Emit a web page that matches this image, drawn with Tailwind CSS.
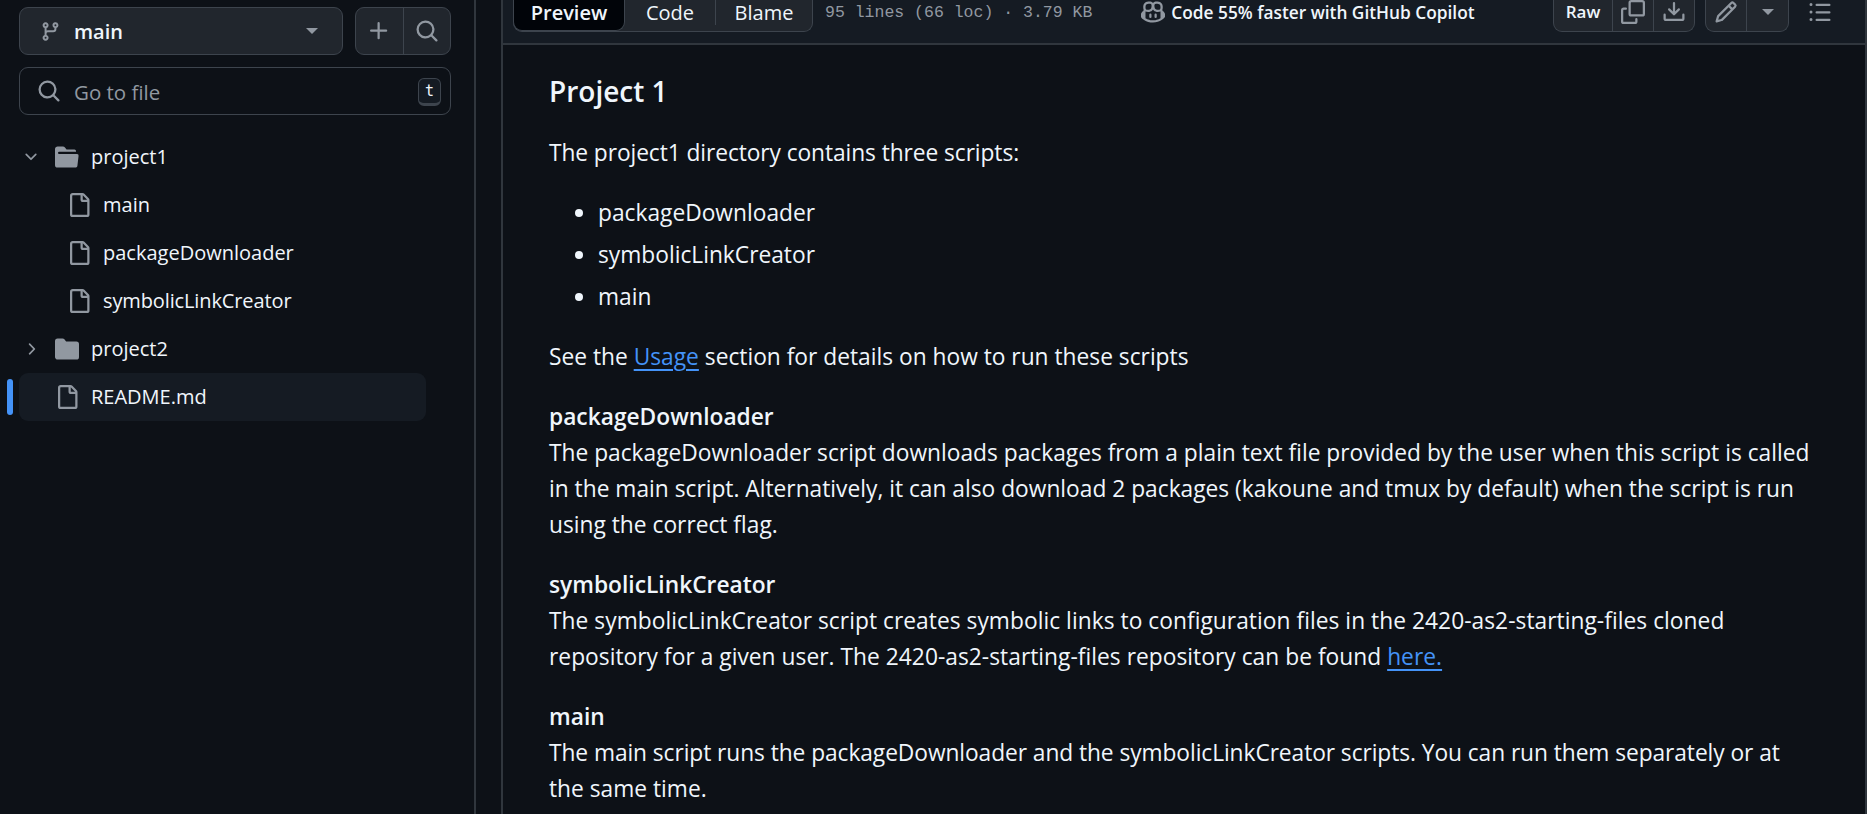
<!DOCTYPE html>
<html lang="en">
<head>
<meta charset="UTF-8">
<title>README.md</title>
<script src="https://cdn.jsdelivr.net/npm/@tailwindcss/browser@4"></script>
</head>
<body class="bg-[#0d1117] text-[#f0f6fc] font-['Open_Sans',sans-serif] overflow-hidden">
<div class="flex h-[814px] w-[1867px] overflow-hidden">

  <!-- file tree -->
  <aside class="w-[476px] shrink-0 border-r-2 border-[#30363d] pl-[19px] pr-[23px] pt-[7px]">
    <div class="flex gap-3 h-12">
      <div class="w-[324px] flex items-center bg-[#21262d] border border-[#3d444d] rounded-[9px] px-5">
        <svg class="w-[21px] h-[21px] text-[#9198a1]" viewBox="0 0 16 16" fill="currentColor"><path d="M9.5 3.25a2.25 2.25 0 1 1 3 2.122V6A2.5 2.5 0 0 1 10 8.5H6a1 1 0 0 0-1 1v1.128a2.251 2.251 0 1 1-1.5 0V5.372a2.25 2.25 0 1 1 1.5 0v1.836A2.493 2.493 0 0 1 6 7h4a1 1 0 0 0 1-1v-.628A2.25 2.25 0 0 1 9.5 3.25Zm-6 0a.75.75 0 1 0 1.5 0 .75.75 0 0 0-1.5 0Zm8.25-.75a.75.75 0 1 0 0 1.5.75.75 0 0 0 0-1.5ZM4.25 12a.75.75 0 1 0 0 1.5.75.75 0 0 0 0-1.5Z"/></svg>
        <span class="ml-[13px] pt-[2px] text-[20px] font-semibold">main</span>
        <span class="ml-auto mr-[4px] w-0 h-0 border-x-[6px] border-x-transparent border-t-[6px] border-t-[#9198a1]"></span>
      </div>
      <div class="flex-1 flex bg-[#21262d] border border-[#3d444d] rounded-[9px] text-[#9198a1]">
        <div class="flex-1 flex items-center justify-center border-r border-[#3d444d]">
          <svg class="w-6 h-6" viewBox="0 0 16 16" fill="currentColor"><path d="M7.75 2a.75.75 0 0 1 .75.75V7h4.25a.75.75 0 0 1 0 1.5H8.5v4.25a.75.75 0 0 1-1.5 0V8.5H2.75a.75.75 0 0 1 0-1.5H7V2.75A.75.75 0 0 1 7.75 2Z"/></svg>
        </div>
        <div class="flex-1 flex items-center justify-center">
          <svg class="w-6 h-6" viewBox="0 0 16 16" fill="currentColor"><path d="M10.68 11.74a6 6 0 0 1-7.922-8.982 6 6 0 0 1 8.982 7.922l3.04 3.04a.749.749 0 1 1-1.06 1.06ZM11.5 7a4.499 4.499 0 1 0-8.997 0A4.499 4.499 0 0 0 11.5 7Z"/></svg>
        </div>
      </div>
    </div>

    <div class="mt-3 h-12 flex items-center border border-[#3d444d] rounded-[9px] pl-[17px] pr-[9px]">
      <svg class="w-6 h-6 text-[#9198a1]" viewBox="0 0 16 16" fill="currentColor"><path d="M10.68 11.74a6 6 0 0 1-7.922-8.982 6 6 0 0 1 8.982 7.922l3.04 3.04a.749.749 0 1 1-1.06 1.06ZM11.5 7a4.499 4.499 0 1 0-8.997 0A4.499 4.499 0 0 0 11.5 7Z"/></svg>
      <span class="ml-[13px] pt-[2px] text-[20.5px] text-[#9198a1]">Go to file</span>
      <span class="ml-auto mt-[2px] w-[23px] h-[28px] flex items-center justify-center rounded-[6px] border border-[#3d444d] border-b-[3px] bg-[#151b23] font-['DejaVu_Sans_Mono',monospace] text-[15px]">t</span>
    </div>

    <ul class="mt-[18px] text-[20px] leading-[48px] w-[407px]">
      <li class="h-12 flex items-center">
        <svg class="ml-[3px] w-[18px] h-[18px] text-[#9198a1]" viewBox="0 0 16 16" fill="currentColor"><path d="M12.78 5.22a.749.749 0 0 1 0 1.06l-4.25 4.25a.749.749 0 0 1-1.06 0L3.22 6.28a.749.749 0 1 1 1.06-1.06L8 8.939l3.72-3.719a.749.749 0 0 1 1.06 0Z"/></svg>
        <svg class="ml-[15px] w-6 h-6 text-[#9198a1]" viewBox="0 0 16 16" fill="currentColor"><path d="M.513 1.513A1.75 1.75 0 0 1 1.75 1h3.5c.55 0 1.07.26 1.4.7l.9 1.2a.25.25 0 0 0 .2.1H13a1 1 0 0 1 1 1v.5H2.75a.75.75 0 0 0 0 1.5h11.978a1 1 0 0 1 .994 1.117L15 13.25A1.75 1.75 0 0 1 13.25 15H1.75A1.75 1.75 0 0 1 0 13.25V2.75c0-.464.184-.91.513-1.237Z"/></svg>
        <span class="ml-[12px]">project1</span>
      </li>
      <li class="h-12 flex items-center pl-[48px]">
        <svg class="w-6 h-6 text-[#9198a1]" viewBox="0 0 16 16" fill="currentColor"><path d="M2 1.75C2 .784 2.784 0 3.75 0h6.586c.464 0 .909.184 1.237.513l2.914 2.914c.329.328.513.773.513 1.237v9.586A1.75 1.75 0 0 1 13.25 16h-9.5A1.75 1.75 0 0 1 2 14.25Zm1.75-.25a.25.25 0 0 0-.25.25v12.5c0 .138.112.25.25.25h9.5a.25.25 0 0 0 .25-.25V6h-2.75A1.75 1.75 0 0 1 9 4.25V1.5Zm6.75.062V4.25c0 .138.112.25.25.25h2.688l-.011-.013-2.914-2.914-.013-.011Z"/></svg>
        <span class="ml-[12px]">main</span>
      </li>
      <li class="h-12 flex items-center pl-[48px]">
        <svg class="w-6 h-6 text-[#9198a1]" viewBox="0 0 16 16" fill="currentColor"><path d="M2 1.75C2 .784 2.784 0 3.75 0h6.586c.464 0 .909.184 1.237.513l2.914 2.914c.329.328.513.773.513 1.237v9.586A1.75 1.75 0 0 1 13.25 16h-9.5A1.75 1.75 0 0 1 2 14.25Zm1.75-.25a.25.25 0 0 0-.25.25v12.5c0 .138.112.25.25.25h9.5a.25.25 0 0 0 .25-.25V6h-2.75A1.75 1.75 0 0 1 9 4.25V1.5Zm6.75.062V4.25c0 .138.112.25.25.25h2.688l-.011-.013-2.914-2.914-.013-.011Z"/></svg>
        <span class="ml-[12px]">packageDownloader</span>
      </li>
      <li class="h-12 flex items-center pl-[48px]">
        <svg class="w-6 h-6 text-[#9198a1]" viewBox="0 0 16 16" fill="currentColor"><path d="M2 1.75C2 .784 2.784 0 3.75 0h6.586c.464 0 .909.184 1.237.513l2.914 2.914c.329.328.513.773.513 1.237v9.586A1.75 1.75 0 0 1 13.25 16h-9.5A1.75 1.75 0 0 1 2 14.25Zm1.75-.25a.25.25 0 0 0-.25.25v12.5c0 .138.112.25.25.25h9.5a.25.25 0 0 0 .25-.25V6h-2.75A1.75 1.75 0 0 1 9 4.25V1.5Zm6.75.062V4.25c0 .138.112.25.25.25h2.688l-.011-.013-2.914-2.914-.013-.011Z"/></svg>
        <span class="ml-[12px] tracking-[-0.12px]">symbolicLinkCreator</span>
      </li>
      <li class="h-12 flex items-center">
        <svg class="ml-[3px] w-[18px] h-[18px] text-[#9198a1]" viewBox="0 0 16 16" fill="currentColor"><path d="M6.22 3.22a.75.75 0 0 1 1.06 0l4.25 4.25a.75.75 0 0 1 0 1.06l-4.25 4.25a.751.751 0 0 1-1.042-.018.751.751 0 0 1-.018-1.042L9.94 8 6.22 4.28a.75.75 0 0 1 0-1.06Z"/></svg>
        <svg class="ml-[15px] w-6 h-6 text-[#9198a1]" viewBox="0 0 16 16" fill="currentColor"><path d="M1.75 1A1.75 1.75 0 0 0 0 2.75v10.5C0 14.216.784 15 1.75 15h12.5A1.75 1.75 0 0 0 16 13.25v-8.5A1.75 1.75 0 0 0 14.25 3H7.5a.25.25 0 0 1-.2-.1l-.9-1.2C6.07 1.26 5.55 1 5 1H1.75Z"/></svg>
        <span class="ml-[12px]">project2</span>
      </li>
      <li class="relative h-12 flex items-center pl-[36px] bg-[#151b23] rounded-[9px]">
        <span class="absolute left-[-12px] top-[6px] w-[6px] h-9 rounded-[3px] bg-[#4493f8]"></span>
        <svg class="w-6 h-6 text-[#9198a1]" viewBox="0 0 16 16" fill="currentColor"><path d="M2 1.75C2 .784 2.784 0 3.75 0h6.586c.464 0 .909.184 1.237.513l2.914 2.914c.329.328.513.773.513 1.237v9.586A1.75 1.75 0 0 1 13.25 16h-9.5A1.75 1.75 0 0 1 2 14.25Zm1.75-.25a.25.25 0 0 0-.25.25v12.5c0 .138.112.25.25.25h9.5a.25.25 0 0 0 .25-.25V6h-2.75A1.75 1.75 0 0 1 9 4.25V1.5Zm6.75.062V4.25c0 .138.112.25.25.25h2.688l-.011-.013-2.914-2.914-.013-.011Z"/></svg>
        <span class="ml-[12px]">README.md</span>
      </li>
    </ul>
  </aside>

  <div class="w-[25px] shrink-0"></div>

  <!-- file view -->
  <main class="flex-1 min-w-0 border-l-2 border-r-2 border-[#30363d]">
    <header class="h-[45px] bg-[#151b23] border-b-2 border-[#30363d] flex items-start pl-[10px] pr-[33px]">
      <div class="flex h-[32px] text-[20px] bg-[#21262d] border border-t-0 border-[#3d444d] rounded-b-[9px]">
        <span class="w-[112px] -ml-px bg-[#010409] border border-t-0 border-[#3d444d] rounded-b-[9px] flex items-center justify-center pb-[4px] font-semibold">Preview</span>
        <span class="w-[91px] flex items-center justify-center mb-[6px] border-r border-[#3d444d]">Code</span>
        <span class="w-[96px] flex items-center justify-center pb-[6px]">Blame</span>
      </div>
      <span class="ml-[12px] mt-[1px] text-[#9198a1] text-[16.5px] font-['Liberation_Mono',monospace]">95 lines (66 loc) · 3.79 KB</span>
      <svg class="ml-[49px] w-6 h-6 text-[#9198a1]" viewBox="0 0 16 16" fill="currentColor"><path d="M7.998 15.035c-4.562 0-7.873-2.914-7.998-3.749V9.338c.085-.628.677-1.686 1.588-2.065.013-.07.024-.143.036-.218.029-.183.06-.384.126-.612-.201-.508-.254-1.084-.254-1.656 0-.87.128-1.769.693-2.484.579-.733 1.494-1.124 2.724-1.261 1.206-.134 2.262.034 2.944.765.05.053.096.108.139.165.044-.057.094-.112.143-.165.682-.731 1.738-.899 2.944-.765 1.23.137 2.145.528 2.724 1.261.566.715.693 1.614.693 2.484 0 .572-.053 1.148-.254 1.656.066.228.098.429.126.612.012.076.024.148.037.218.924.385 1.522 1.471 1.591 2.095v1.872c0 .766-3.351 3.795-8.002 3.795Zm0-1.485c2.28 0 4.584-1.11 5.002-1.433V7.862l-.023-.116c-.49.21-1.075.291-1.727.291-1.146 0-2.059-.327-2.71-.991A3.222 3.222 0 0 1 8 6.303a3.24 3.24 0 0 1-.544.743c-.65.664-1.563.991-2.71.991-.652 0-1.236-.081-1.727-.291l-.023.116v4.255c.419.323 2.722 1.433 5.002 1.433ZM6.762 2.83c-.193-.206-.637-.413-1.682-.297-1.019.113-1.479.404-1.713.7-.247.312-.369.789-.369 1.554 0 .793.129 1.171.308 1.371.162.181.519.379 1.442.379.853 0 1.339-.235 1.638-.54.315-.322.527-.827.617-1.553.117-.935-.037-1.395-.241-1.614Zm4.155-.297c-1.044-.116-1.488.091-1.681.297-.204.219-.359.679-.242 1.614.091.726.303 1.231.618 1.553.299.305.784.54 1.638.54.922 0 1.28-.198 1.442-.379.179-.2.308-.578.308-1.371 0-.765-.123-1.242-.37-1.554-.233-.296-.693-.587-1.713-.7Z"/><path d="M6.25 9.037a.75.75 0 0 1 .75.75v1.501a.75.75 0 0 1-1.5 0V9.787a.75.75 0 0 1 .75-.75Zm4.25.75v1.501a.75.75 0 0 1-1.5 0V9.787a.75.75 0 0 1 1.5 0Z"/></svg>
      <span class="ml-[6px] text-[17.3px] font-semibold">Code 55% faster with GitHub Copilot</span>
      <div class="ml-auto flex items-start text-[#9198a1]">
        <div class="flex h-[32px] bg-[#21262d] border border-t-0 border-[#3d444d] rounded-b-[9px]">
          <span class="w-[59px] flex items-center justify-center pb-[8px] text-[17px] font-semibold text-[#f0f6fc] border-r border-[#3d444d]">Raw</span>
          <span class="w-[41px] flex items-center justify-center pb-[8px] border-r border-[#3d444d]">
            <svg class="w-6 h-6" viewBox="0 0 16 16" fill="currentColor"><path d="M0 6.75C0 5.784.784 5 1.75 5h1.5a.75.75 0 0 1 0 1.5h-1.5a.25.25 0 0 0-.25.25v7.5c0 .138.112.25.25.25h7.5a.25.25 0 0 0 .25-.25v-1.5a.75.75 0 0 1 1.5 0v1.5A1.75 1.75 0 0 1 9.25 16h-7.5A1.75 1.75 0 0 1 0 14.25Z"/><path d="M5 1.75C5 .784 5.784 0 6.75 0h7.5C15.216 0 16 .784 16 1.75v7.5A1.75 1.75 0 0 1 14.25 11h-7.5A1.75 1.75 0 0 1 5 9.25Zm1.75-.25a.25.25 0 0 0-.25.25v7.5c0 .138.112.25.25.25h7.5a.25.25 0 0 0 .25-.25v-7.5a.25.25 0 0 0-.25-.25Z"/></svg>
          </span>
          <span class="w-[40px] flex items-center justify-center pb-[8px]">
            <svg class="w-6 h-6" viewBox="0 0 16 16" fill="currentColor"><path d="M2.75 14A1.75 1.75 0 0 1 1 12.25v-2.5a.75.75 0 0 1 1.5 0v2.5c0 .138.112.25.25.25h10.5a.25.25 0 0 0 .25-.25v-2.5a.75.75 0 0 1 1.5 0v2.5A1.75 1.75 0 0 1 13.25 14Z"/><path d="M7.25 7.689V2a.75.75 0 0 1 1.5 0v5.689l1.97-1.969a.749.749 0 1 1 1.06 1.06l-3.25 3.25a.749.749 0 0 1-1.06 0L4.22 6.78a.749.749 0 1 1 1.06-1.06l1.97 1.969Z"/></svg>
          </span>
        </div>
        <div class="ml-[10px] flex h-[32px] bg-[#21262d] border border-t-0 border-[#3d444d] rounded-b-[9px]">
          <span class="w-[41px] flex items-center justify-center pb-[8px] border-r border-[#3d444d]">
            <svg class="w-6 h-6" viewBox="0 0 16 16" fill="currentColor"><path d="M11.013 1.427a1.75 1.75 0 0 1 2.474 0l1.086 1.086a1.75 1.75 0 0 1 0 2.474l-8.61 8.61c-.21.21-.47.364-.756.445l-3.251.93a.75.75 0 0 1-.927-.928l.929-3.25c.081-.286.235-.547.445-.758l8.61-8.61Zm.176 4.823L9.75 4.81l-6.286 6.287a.253.253 0 0 0-.064.108l-.558 1.953 1.953-.558a.253.253 0 0 0 .108-.064Zm1.238-3.763a.25.25 0 0 0-.354 0L10.811 3.75l1.439 1.44 1.263-1.263a.25.25 0 0 0 0-.354Z"/></svg>
          </span>
          <span class="w-[41px] flex items-center justify-center pb-[8px]">
            <span class="w-0 h-0 border-x-[6px] border-x-transparent border-t-[6px] border-t-[#9198a1]"></span>
          </span>
        </div>
        <svg class="ml-[19px] w-6 h-6" viewBox="0 0 16 16" fill="currentColor"><path d="M5.75 2.5h8.5a.75.75 0 0 1 0 1.5h-8.5a.75.75 0 0 1 0-1.5Zm0 5h8.5a.75.75 0 0 1 0 1.5h-8.5a.75.75 0 0 1 0-1.5Zm0 5h8.5a.75.75 0 0 1 0 1.5h-8.5a.75.75 0 0 1 0-1.5ZM2 14a1 1 0 1 1 0-2 1 1 0 0 1 0 2Zm1-6a1 1 0 1 1-2 0 1 1 0 0 1 2 0ZM2 4a1 1 0 1 1 0-2 1 1 0 0 1 0 2Z"/></svg>
      </div>
    </header>

    <article class="pl-[46px] text-[22.75px] leading-[36px]">
      <h2 class="mt-[27px] text-[28px] leading-[38px] font-semibold">Project 1</h2>
      <p class="mt-[25px] tracking-[-0.08px]">The project1 directory contains three scripts:</p>
      <ul class="mt-[24px] pl-[49px] list-disc">
        <li>packageDownloader</li>
        <li class="mt-[6px]">symbolicLinkCreator</li>
        <li class="mt-[6px]">main</li>
      </ul>
      <p class="mt-[24px]">See the <a class="text-[#4493f8] underline decoration-[1.5px] underline-offset-4">Usage</a> section for details on how to run these scripts</p>
      <p class="mt-[24px]"><strong class="font-semibold">packageDownloader</strong><br>The packageDownloader script downloads packages from a plain text file provided by the user when this script is called<br>in the main script. Alternatively, it can also download 2 packages (kakoune and tmux by default) when the script is run<br>using the correct flag.</p>
      <p class="mt-[24px]"><strong class="font-semibold">symbolicLinkCreator</strong><br><span class="tracking-[0.04px]">The symbolicLinkCreator script creates symbolic links to configuration files in the 2420-as2-starting-files cloned</span><br><span class="tracking-[0.03px]">repository for a given user. The 2420-as2-starting-files repository can be found <a class="text-[#4493f8] underline decoration-[1.5px] underline-offset-4">here.</a></span></p>
      <p class="mt-[24px]"><strong class="font-semibold">main</strong><br><span class="tracking-[-0.07px]">The main script runs the packageDownloader and the symbolicLinkCreator scripts. You can run them separately or at</span><br>the same time.</p>
    </article>
  </main>
</div>
</body>
</html>
